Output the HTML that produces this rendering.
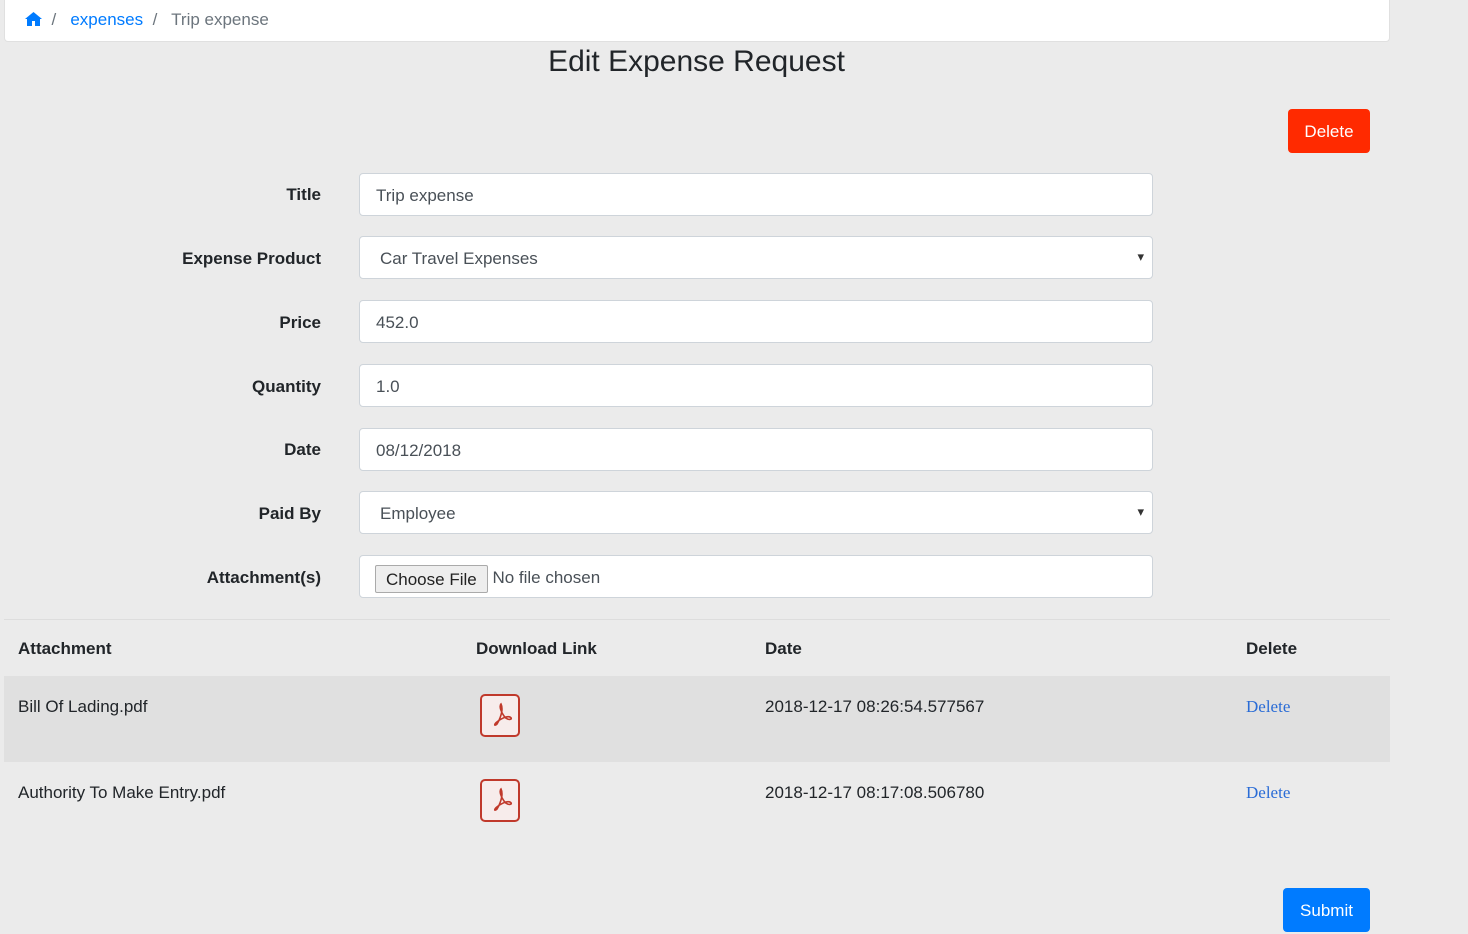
<!DOCTYPE html>
<html><head><meta charset="utf-8"><style>
*{box-sizing:border-box}
body{margin:0;background:#ebebeb;font-family:"Liberation Sans",sans-serif;color:#212529;width:1468px;height:931px;overflow:hidden;position:relative}
.bc{position:absolute;left:4px;top:0;width:1386px;height:42px;background:#fff;border-radius:0 0 4px 4px;border:1px solid #e0e0e0;border-top:none;font-size:17px;line-height:40px;padding-left:20px;color:#6c757d}
.bc a{color:#007bff;text-decoration:none}
h1{position:absolute;top:44px;left:0;width:1393px;text-align:center;margin:0;font-size:30px;font-weight:normal;line-height:36px;color:#212529}
.del{position:absolute;left:1288px;top:109px;width:82px;height:44px;background:#ff2a00;color:#fff;border-radius:4px;font-size:17px;text-align:center;line-height:46px}
.lbl{position:absolute;right:1147px;font-weight:bold;font-size:17px}
.inp{position:absolute;left:359px;width:794px;height:43px;background:#fff;border:1px solid #ced4da;border-radius:4px;font-size:17px;line-height:44px;padding-left:16px;color:#495057}
.sel::after{content:"▾";position:absolute;right:8px;top:-2px;font-size:13px;color:#333}
.fb{display:inline-block;border:1px solid #aaa;background:#eee;height:28px;line-height:28px;padding:0 10px;font-size:17px;color:#222;border-radius:2px;vertical-align:middle}
.th{position:absolute;top:639px;font-weight:bold;font-size:17px}
.row{position:absolute;left:4px;width:1386px;height:86px}
.c{position:absolute;top:21px;font-size:17px}
.dl{color:#2a6cd6;font-family:"Liberation Serif",serif;font-size:17px}
.sub{position:absolute;left:1283px;top:888px;width:87px;height:44px;background:#007bff;color:#fff;border-radius:4px;font-size:17px;text-align:center;line-height:46px}
</style></head><body>
<div class="bc"><svg width="17" height="14" viewBox="0 0 17 14" style="vertical-align:-1px"><path d="M8.5 0L0 7h2v7h5V9h3v5h5V7h2z" fill="#007bff"/></svg> &nbsp;/ &nbsp; <a>expenses</a> &nbsp;/ &nbsp; Trip expense</div>
<h1>Edit Expense Request</h1>
<div class="del">Delete</div>
<div class="lbl" style="top:185px">Title</div><div class="inp" style="top:173px">Trip expense</div>
<div class="lbl" style="top:249px">Expense Product</div><div class="inp sel" style="top:236px;padding-left:20px">Car Travel Expenses</div>
<div class="lbl" style="top:313px">Price</div><div class="inp" style="top:300px">452.0</div>
<div class="lbl" style="top:377px">Quantity</div><div class="inp" style="top:364px">1.0</div>
<div class="lbl" style="top:440px">Date</div><div class="inp" style="top:428px">08/12/2018</div>
<div class="lbl" style="top:504px">Paid By</div><div class="inp sel" style="top:491px;padding-left:20px">Employee</div>
<div class="lbl" style="top:568px">Attachment(s)</div><div class="inp" style="top:555px;padding-left:15px"><span class="fb">Choose File</span> No file chosen</div>
<div style="position:absolute;left:4px;top:619px;width:1386px;border-top:1px solid #ddd"></div>
<div class="th" style="left:18px">Attachment</div><div class="th" style="left:476px">Download Link</div><div class="th" style="left:765px">Date</div><div class="th" style="left:1246px">Delete</div>
<div class="row" style="top:676px;background:#e0e0e0">
<div class="c" style="left:14px">Bill Of Lading.pdf</div>
<svg style="position:absolute;left:476px;top:18px" width="40" height="43" viewBox="0 0 40 43"><rect x="1" y="1" width="38" height="41" rx="4" fill="#f7eceb" stroke="#c0392b" stroke-width="2"/><path d="M21 10c-2 2 0 8 3 12 2 3 5 4 7 3 1-1-1-3-5-2-4 1-10 5-11 7-1 2 1 1 2 0 2-3 5-10 5-15 0-3-1-5-1-5z" fill="none" stroke="#c0392b" stroke-width="1.6"/></svg>
<div class="c" style="left:761px">2018-12-17 08:26:54.577567</div>
<div class="c dl" style="left:1242px">Delete</div></div>
<div class="row" style="top:762px">
<div class="c" style="left:14px">Authority To Make Entry.pdf</div>
<svg style="position:absolute;left:476px;top:17px" width="40" height="43" viewBox="0 0 40 43"><rect x="1" y="1" width="38" height="41" rx="4" fill="#f7eceb" stroke="#c0392b" stroke-width="2"/><path d="M21 10c-2 2 0 8 3 12 2 3 5 4 7 3 1-1-1-3-5-2-4 1-10 5-11 7-1 2 1 1 2 0 2-3 5-10 5-15 0-3-1-5-1-5z" fill="none" stroke="#c0392b" stroke-width="1.6"/></svg>
<div class="c" style="left:761px">2018-12-17 08:17:08.506780</div>
<div class="c dl" style="left:1242px">Delete</div></div>
<div class="sub">Submit</div>
</body></html>
